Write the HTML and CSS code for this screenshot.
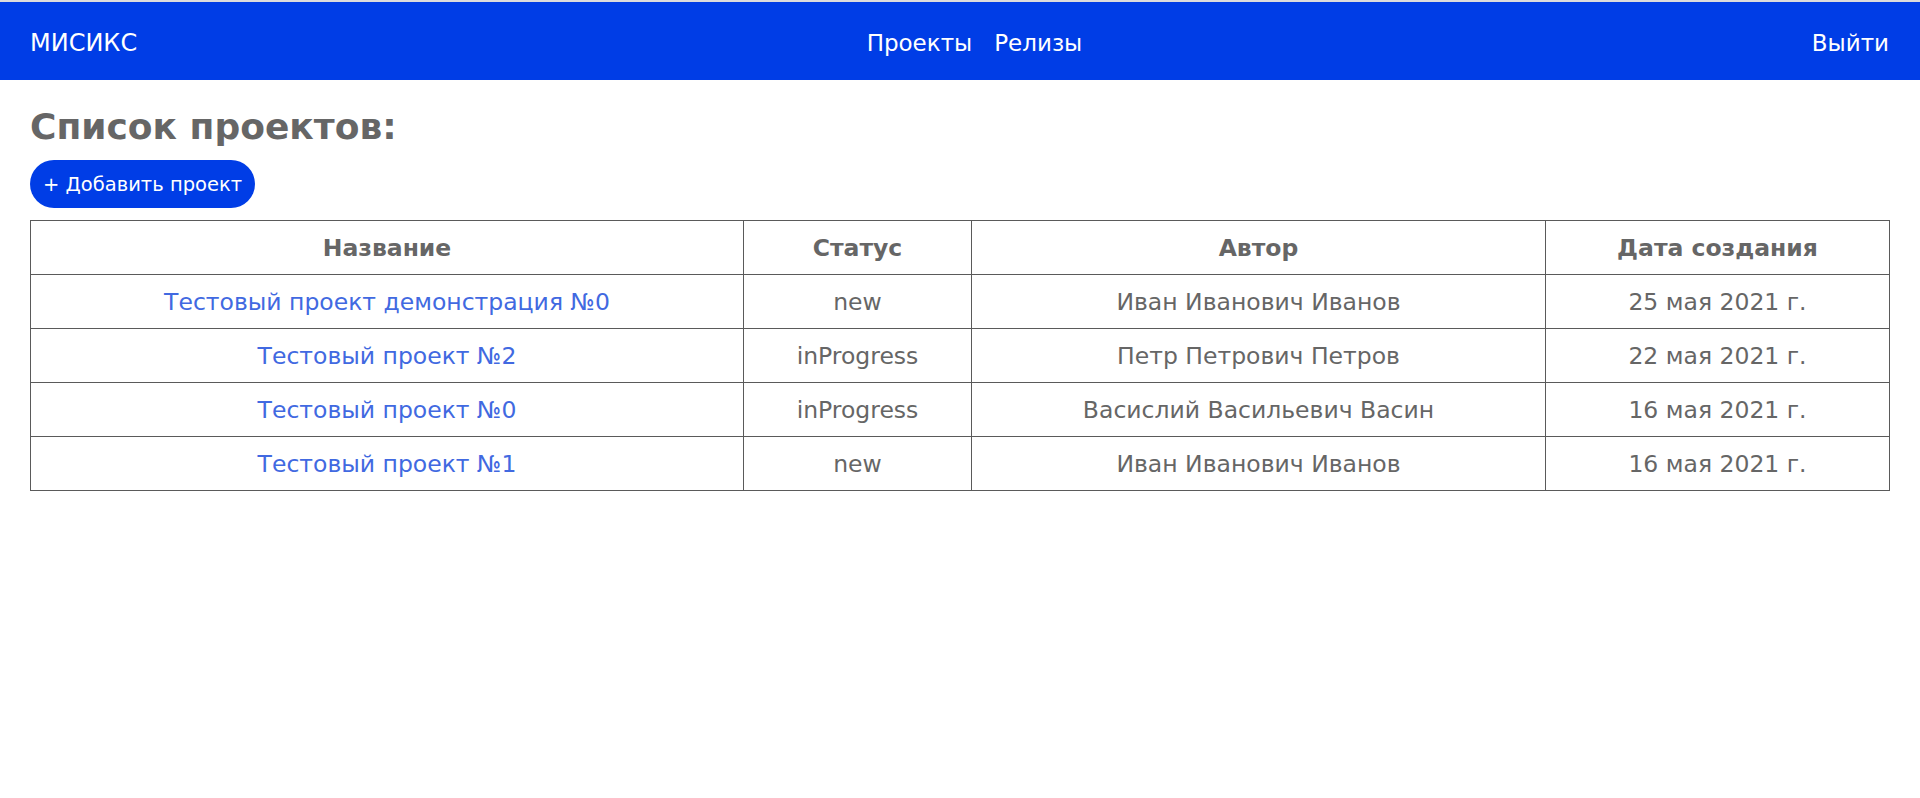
FILE: index.html
```html
<!DOCTYPE html>
<html lang="ru">
<head>
<meta charset="utf-8">
<title>МИСИКС</title>
<link rel="stylesheet" href="styles.css">
</head>
<body>
<header class="topbar">
  <a class="logo" href="#">МИСИКС</a>
  <nav class="nav">
    <a href="#">Проекты</a>
    <a href="#">Релизы</a>
  </nav>
  <a class="logout" href="#">Выйти</a>
</header>
<main class="content">
  <h1 class="title">Список проектов:</h1>
  <button class="add-btn" type="button">+ Добавить проект</button>
  <table class="projects">
    <colgroup>
      <col class="c-name"><col class="c-status"><col class="c-author"><col class="c-date">
    </colgroup>
    <thead>
      <tr><th>Название</th><th>Статус</th><th>Автор</th><th>Дата создания</th></tr>
    </thead>
    <tbody>
      <tr><td><a href="#">Тестовый проект демонстрация №0</a></td><td>new</td><td>Иван Иванович Иванов</td><td>25 мая 2021 г.</td></tr>
      <tr><td><a href="#">Тестовый проект №2</a></td><td>inProgress</td><td>Петр Петрович Петров</td><td>22 мая 2021 г.</td></tr>
      <tr><td><a href="#">Тестовый проект №0</a></td><td>inProgress</td><td>Васислий Васильевич Васин</td><td>16 мая 2021 г.</td></tr>
      <tr><td><a href="#">Тестовый проект №1</a></td><td>new</td><td>Иван Иванович Иванов</td><td>16 мая 2021 г.</td></tr>
    </tbody>
  </table>
</main>
</body>
</html>
```
FILE: styles.css
```css
* { box-sizing: border-box; }
html, body { margin: 0; padding: 0; }
body {
  font-family: "DejaVu Sans", Verdana, sans-serif;
  color: #666;
  background: #fff;
  border-top: 2px solid #dcdcdc;
}
a { text-decoration: none; }

.topbar {
  height: 78px;
  background: #003de6;
  display: flex;
  align-items: center;
  justify-content: space-between;
  padding: 4px 31px 0 30px;
  font-size: 24px;
}
.topbar a { color: #fff; }
.nav { display: flex; gap: 22px; font-size: 23px; }
.logout { font-size: 23px; }

.content { padding: 0 30px; }
.title {
  font-size: 36px;
  font-weight: bold;
  color: #666;
  margin: 26px 0 0;
  line-height: 42px;
}
.add-btn {
  margin-top: 12px;
  height: 48px;
  padding: 0 13px;
  border: none;
  border-radius: 24px;
  background: #003de6;
  color: #fff;
  font-family: "DejaVu Sans", Verdana, sans-serif;
  font-size: 19.5px;
  display: block;
}
.projects {
  margin-top: 12px;
  width: 100%;
  border-collapse: collapse;
  table-layout: fixed;
  font-size: 23.5px;
}
.c-name { width: 713px; }
.c-status { width: 228px; }
.c-author { width: 574px; }
.c-date { width: auto; }
.projects th, .projects td {
  border: 1px solid #5a5a5a;
  height: 54px;
  padding: 0 8px;
  text-align: center;
  vertical-align: middle;
  color: #666;
}
.projects th { font-weight: bold; }
.projects td a { color: #4169e1; }
```
